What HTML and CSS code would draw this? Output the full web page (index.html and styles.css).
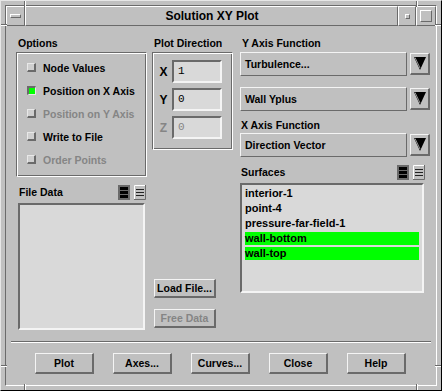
FILE: index.html
```html
<!DOCTYPE html>
<html lang="en">
<head>
    <meta charset="UTF-8">
    <title>Solution XY Plot</title>
    <link rel="stylesheet" href="styles.css">
</head>
<body>

    <div class="wm">
        <!-- resize handle notches on the window frame -->
        <span class="notch v" style="left: 23px; top: 0;"></span>
        <span class="notch v" style="left: 415px; top: 0;"></span>
        <span class="notch v" style="left: 23px; bottom: 0;"></span>
        <span class="notch v" style="left: 415px; bottom: 0;"></span>
        <span class="notch h" style="top: 23px; left: 0;"></span>
        <span class="notch h" style="top: 23px; right: 0;"></span>
        <span class="notch h" style="top: 364px; left: 0;"></span>
        <span class="notch h" style="top: 364px; right: 0;"></span>

        <div class="wm-inner">
            <div class="titlebar">
                <div class="tb-btn tb-menu"><span class="menu-bar"></span></div>
                <div class="tb-title">Solution XY Plot</div>
                <div class="tb-btn tb-min"><span class="min-dot"></span></div>
                <div class="tb-btn tb-max"><span class="max-box"></span></div>
            </div>

            <div class="dialog">
                <div class="main">
                    <!-- left column -->
                    <div class="col col-left">
                        <div class="label">Options</div>
                        <div class="frame options">
                            <div class="check"><span class="box"></span>Node Values</div>
                            <div class="check on"><span class="box"></span>Position on X Axis</div>
                            <div class="check off"><span class="box"></span>Position on Y Axis</div>
                            <div class="check"><span class="box"></span>Write to File</div>
                            <div class="check off"><span class="box"></span>Order Points</div>
                        </div>
                        <div class="list-head file-head">
                            <span>File Data</span>
                            <span class="modes">
                                <svg width="12" height="15" viewBox="0 0 12 15">
                                    <rect width="12" height="15" fill="#6a6a6a"/>
                                    <rect x="2" y="2" width="8" height="3" fill="#000"/>
                                    <rect x="2" y="6" width="8" height="3" fill="#000"/>
                                    <rect x="2" y="10" width="8" height="3" fill="#000"/>
                                </svg>
                                <svg width="12" height="15" viewBox="0 0 12 15">
                                    <rect width="12" height="15" fill="#c0c0c0"/>
                                    <path d="M0 14.5H11.5V0" stroke="#6a6a6a" fill="none"/>
                                    <path d="M0.5 14V0.5H11" stroke="#fff" fill="none"/>
                                    <path d="M2 4.5h8M2 7.5h8M2 10.5h8" stroke="#222"/>
                                </svg>
                            </span>
                        </div>
                        <div class="list file-list"></div>
                    </div>

                    <!-- middle column -->
                    <div class="col col-mid">
                        <div class="label">Plot Direction</div>
                        <div class="frame direction">
                            <div class="axis"><span class="axis-name">X</span><span class="field">1</span></div>
                            <div class="axis"><span class="axis-name">Y</span><span class="field">0</span></div>
                            <div class="axis off"><span class="axis-name">Z</span><span class="field">0</span></div>
                        </div>
                        <div class="mid-buttons">
                            <button class="btn small">Load File...</button>
                            <button class="btn small" disabled>Free Data</button>
                        </div>
                    </div>

                    <!-- right column -->
                    <div class="col col-right">
                        <div class="label">Y Axis Function</div>
                        <div class="dd">
                            <div class="dd-field">Turbulence...</div>
                            <div class="dd-arrow">
                                <svg width="12" height="13" viewBox="0 0 12 13">
                                    <polygon points="0,0 12,0 6,13" fill="#000"/>
                                    <path d="M1 0.5L6 11" stroke="#9a9a9a"/>
                                </svg>
                            </div>
                        </div>
                        <div class="dd second">
                            <div class="dd-field">Wall Yplus</div>
                            <div class="dd-arrow">
                                <svg width="12" height="13" viewBox="0 0 12 13">
                                    <polygon points="0,0 12,0 6,13" fill="#000"/>
                                    <path d="M1 0.5L6 11" stroke="#9a9a9a"/>
                                </svg>
                            </div>
                        </div>
                        <div class="label label-x">X Axis Function</div>
                        <div class="dd">
                            <div class="dd-field">Direction Vector</div>
                            <div class="dd-arrow">
                                <svg width="12" height="13" viewBox="0 0 12 13">
                                    <polygon points="0,0 12,0 6,13" fill="#000"/>
                                    <path d="M1 0.5L6 11" stroke="#9a9a9a"/>
                                </svg>
                            </div>
                        </div>
                        <div class="list-head surf-head">
                            <span>Surfaces</span>
                            <span class="modes">
                                <svg width="12" height="15" viewBox="0 0 12 15">
                                    <rect width="12" height="15" fill="#6a6a6a"/>
                                    <rect x="2" y="2" width="8" height="3" fill="#000"/>
                                    <rect x="2" y="6" width="8" height="3" fill="#000"/>
                                    <rect x="2" y="10" width="8" height="3" fill="#000"/>
                                </svg>
                                <svg width="12" height="15" viewBox="0 0 12 15">
                                    <rect width="12" height="15" fill="#c0c0c0"/>
                                    <path d="M0 14.5H11.5V0" stroke="#6a6a6a" fill="none"/>
                                    <path d="M0.5 14V0.5H11" stroke="#fff" fill="none"/>
                                    <path d="M2 4.5h8M2 7.5h8M2 10.5h8" stroke="#222"/>
                                </svg>
                            </span>
                        </div>
                        <div class="list surf-list">
                            <div class="item">interior-1</div>
                            <div class="item">point-4</div>
                            <div class="item">pressure-far-field-1</div>
                            <div class="item sel">wall-bottom</div>
                            <div class="item sel">wall-top</div>
                        </div>
                    </div>
                </div>

                <div class="separator"></div>

                <div class="actions">
                    <button class="btn">Plot</button>
                    <button class="btn">Axes...</button>
                    <button class="btn">Curves...</button>
                    <button class="btn">Close</button>
                    <button class="btn">Help</button>
                </div>
            </div>
        </div>
    </div>

</body>
</html>
```

FILE: styles.css
```css
/* General */
* {
    margin: 0;
    padding: 0;
    box-sizing: border-box;
}

body {
    background-color: #c0c0c0;
    font-family: "Liberation Sans", Arial, sans-serif;
    font-weight: bold;
    font-size: 10.5px;
    color: #000;
}

/* Window manager frame */
.wm {
    position: relative;
    width: 442px;
    height: 391px;
    padding: 4px;
    background-color: #c0c0c0;
    border: 1px solid;
    border-color: #e6e6e6 #000 #000 #e6e6e6;
}

.notch {
    position: absolute;
}

.notch.v {
    width: 2px;
    height: 6px;
    border-left: 1px solid #6a6a6a;
    border-right: 1px solid #fff;
}

.notch.h {
    width: 6px;
    height: 2px;
    border-top: 1px solid #6a6a6a;
    border-bottom: 1px solid #fff;
}

.wm-inner {
    height: 100%;
    display: flex;
    flex-direction: column;
    border: 1px solid;
    border-color: #6a6a6a #fff #fff #6a6a6a;
}

.titlebar {
    display: flex;
    height: 20px;
}

.tb-btn, .tb-title {
    display: flex;
    align-items: center;
    justify-content: center;
    border: 1px solid;
    border-color: #fff #6a6a6a #6a6a6a #fff;
}

.tb-menu {
    width: 19px;
}

.tb-title {
    flex: 1;
    font-size: 12px;
    padding-left: 1px;
}

.tb-min {
    width: 18px;
}

.tb-max {
    width: 20px;
}

.menu-bar, .min-dot, .max-box {
    border: 1px solid;
    border-color: #fff #6a6a6a #6a6a6a #fff;
}

.menu-bar {
    width: 11px;
    height: 4px;
    margin-top: -1px;
}

.min-dot {
    width: 5px;
    height: 5px;
}

.max-box {
    width: 12px;
    height: 12px;
}

/* Dialog body */
.dialog {
    flex: 1;
    padding: 10px 6px 11px 10px;
    display: flex;
    flex-direction: column;
}

.main {
    display: flex;
    height: 294px;
}

.col {
    display: flex;
    flex-direction: column;
}

.col-left {
    width: 131px;
    margin-right: 5px;
}

.col-mid {
    width: 81px;
    margin-right: 7px;
}

.col-right {
    width: 190px;
}

.label {
    height: 16px;
    line-height: 14px;
    padding-left: 2px;
}

.frame {
    border: 1px solid;
    border-color: #6a6a6a #fff #fff #6a6a6a;
    box-shadow: inset 1px 1px 0 #fff, inset -1px -1px 0 #6a6a6a;
}

/* Options */
.options {
    height: 125px;
    padding: 3px 0 0 10px;
}

.check {
    height: 23px;
    display: flex;
    align-items: center;
    gap: 7px;
}

.box {
    width: 9px;
    height: 9px;
    background-color: #cfcfcf;
    border-style: solid;
    border-width: 1px 2px 2px 1px;
    border-color: #e8e8e8 #6a6a6a #6a6a6a #e8e8e8;
}

.check.on .box {
    background-color: #00ff00;
    border-width: 2px 1px 1px 2px;
    border-color: #6a6a6a #e8e8e8 #e8e8e8 #6a6a6a;
}

.check.off {
    color: #858585;
}

/* Lists */
.list-head {
    display: flex;
    align-items: center;
    justify-content: space-between;
}

.modes {
    display: flex;
    gap: 4px;
}

.modes svg {
    display: block;
}

.file-head {
    height: 18px;
    margin-top: 6px;
    margin-bottom: 2px;
    padding: 0 1px 0 3px;
}

.list {
    background-color: #d9d9d9;
    border: 2px solid;
    border-color: #6a6a6a #f4f4f4 #f4f4f4 #6a6a6a;
}

.file-list {
    height: 127px;
    margin: 0 2px 0 2px;
}

/* Plot direction */
.direction {
    height: 98px;
    padding: 7px 0 0 4px;
}

.axis {
    display: flex;
    align-items: center;
    height: 23px;
    margin-bottom: 5px;
}

.axis-name {
    width: 13px;
    margin-right: 2px;
    text-align: center;
    font-size: 12px;
}

.field {
    width: 50px;
    height: 23px;
    padding-left: 4px;
    line-height: 19px;
    background-color: #d9d9d9;
    border: 2px solid;
    border-color: #6a6a6a #f4f4f4 #f4f4f4 #6a6a6a;
    font-family: "Liberation Mono", monospace;
    font-weight: normal;
    font-size: 11px;
}

.axis.off {
    color: #858585;
}

.mid-buttons {
    margin-top: auto;
    margin-bottom: 2px;
    padding-left: 2px;
    display: flex;
    flex-direction: column;
    gap: 11px;
}

/* Buttons */
.btn {
    width: 59px;
    height: 21px;
    background-color: #c0c0c0;
    font-family: inherit;
    font-weight: bold;
    font-size: 10.5px;
    color: #000;
    border-style: solid;
    border-width: 1px 2px 2px 1px;
    border-color: #f4f4f4 #6a6a6a #6a6a6a #f4f4f4;
}

.btn.small {
    width: 62px;
    height: 19px;
}

.btn:disabled {
    color: #858585;
}

/* Option menus */
.dd {
    display: flex;
    align-items: center;
    height: 24px;
}

.dd.second {
    margin-top: 11px;
}

.dd-field {
    width: 167px;
    height: 24px;
    padding-left: 4px;
    line-height: 22px;
    border: 1px solid;
    border-color: #f4f4f4 #6a6a6a #6a6a6a #f4f4f4;
}

.dd-arrow {
    width: 20px;
    height: 22px;
    margin-left: 3px;
    display: flex;
    align-items: center;
    justify-content: center;
    border-style: solid;
    border-width: 1px 2px 2px 1px;
    border-color: #f4f4f4 #6a6a6a #6a6a6a #f4f4f4;
}

.label-x {
    height: 15px;
    margin-top: 7px;
    padding-left: 1px;
}

.surf-head {
    height: 14px;
    margin-top: 8px;
    margin-bottom: 4px;
    padding: 0 5px 0 1px;
}

.surf-list {
    width: 184px;
    height: 110px;
    padding: 2px 3px;
}

.item {
    height: 13px;
    line-height: 13px;
    margin-bottom: 2px;
    font-size: 11px;
}

.item.sel {
    background-color: #00ff00;
}

/* Bottom action area */
.separator {
    height: 2px;
    margin: 11px -1px 0 -5px;
    border-top: 1px solid #6a6a6a;
    border-bottom: 1px solid #fff;
}

.actions {
    margin-top: 10px;
    margin-right: 5px;
    display: flex;
    justify-content: center;
    gap: 19px;
}
```
